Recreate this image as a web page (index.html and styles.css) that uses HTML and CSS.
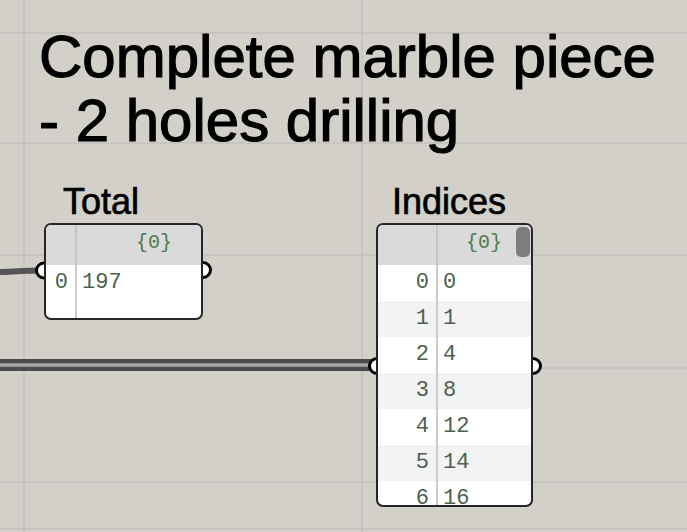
FILE: index.html
```html
<!DOCTYPE html>
<html>
<head>
<meta charset="utf-8">
<link rel="stylesheet" href="styles.css">
</head>
<body>
<div class="canvas">
  <svg class="layer" width="687" height="532" viewBox="0 0 687 532">
    <g class="grid">
      <line x1="24" y1="0" x2="24" y2="532"/>
      <line x1="362" y1="0" x2="362" y2="532"/>
      <line x1="0" y1="33" x2="687" y2="33"/>
      <line x1="0" y1="143" x2="687" y2="143"/>
      <line x1="0" y1="255" x2="687" y2="255"/>
      <line x1="0" y1="368" x2="687" y2="368"/>
      <line x1="0" y1="482" x2="687" y2="482"/>
      <line x1="0" y1="529" x2="687" y2="529"/>
    </g>
  </svg>

  <div class="title">Complete marble piece<br>- 2 holes drilling</div>

  <svg class="layer" width="687" height="532" viewBox="0 0 687 532">
    <path class="wire" d="M0 272 C 14 271.5, 26 270.5, 44 270.5"/>
    <path class="wire-list-outer" d="M0 365 L376 365"/>
    <path class="wire-list-inner" d="M0 365 L376 365"/>
    <circle class="grip" cx="44" cy="270.5" r="7.5"/>
    <circle class="grip" cx="203" cy="270" r="7.5"/>
    <circle class="grip" cx="377" cy="366" r="7.5"/>
    <circle class="grip" cx="533" cy="366" r="7.5"/>
  </svg>

  <div class="node node-total">
    <div class="label label-total">Total</div>
    <div class="panel panel-total">
      <div class="row head"><div class="idx"></div><div class="val">{0}</div></div>
      <div class="row"><div class="idx">0</div><div class="val">197</div></div>
      <div class="row"><div class="idx"></div><div class="val"></div></div>
    </div>
  </div>

  <div class="node node-indices">
    <div class="label label-indices">Indices</div>
    <div class="panel panel-indices">
      <div class="scroll"></div>
      <div class="row head"><div class="idx"></div><div class="val">{0}</div></div>
      <div class="row"><div class="idx">0</div><div class="val">0</div></div>
      <div class="row alt"><div class="idx">1</div><div class="val">1</div></div>
      <div class="row"><div class="idx">2</div><div class="val">4</div></div>
      <div class="row alt"><div class="idx">3</div><div class="val">8</div></div>
      <div class="row"><div class="idx">4</div><div class="val">12</div></div>
      <div class="row alt"><div class="idx">5</div><div class="val">14</div></div>
      <div class="row"><div class="idx">6</div><div class="val">16</div></div>
    </div>
  </div>
</div>
</body>
</html>
```

FILE: styles.css
```css
html, body {
  margin: 0;
  padding: 0;
  background: #d3d0ca;
}

.canvas {
  position: relative;
  width: 687px;
  height: 532px;
  overflow: hidden;
  background: #d3d0ca;
  font-family: "Liberation Sans", Arial, sans-serif;
}

.layer {
  position: absolute;
  left: 0;
  top: 0;
  display: block;
}

.grid line {
  stroke: #c4c1bb;
  stroke-width: 1.5;
}

.title {
  position: absolute;
  left: 39px;
  top: 25px;
  font-size: 60px;
  line-height: 64px;
  color: #000;
  white-space: nowrap;
  -webkit-text-stroke: 1.2px #000;
}

.wire {
  fill: none;
  stroke: #555555;
  stroke-width: 6;
}

.wire-list-outer {
  fill: none;
  stroke: #4b4b4b;
  stroke-width: 12;
}

.wire-list-inner {
  fill: none;
  stroke: #a9a7a3;
  stroke-width: 3.5;
}

.grip {
  fill: #ffffff;
  stroke: #000000;
  stroke-width: 3;
}

.node {
  position: absolute;
  display: flex;
  flex-direction: column;
  gap: 1px;
}

.node-total {
  left: 44px;
  top: 182px;
}

.node-indices {
  left: 376px;
  top: 182px;
}

.label {
  font-size: 36px;
  line-height: 40px;
  height: 40px;
  color: #000;
  white-space: nowrap;
  -webkit-text-stroke: 0.7px #000;
}

.label-total {
  margin-left: 19px;
}

.label-indices {
  margin-left: 16px;
}

.panel {
  position: relative;
  box-sizing: border-box;
  border: 2px solid #262626;
  border-radius: 7px;
  background: #ffffff;
  overflow: hidden;
  display: flex;
  flex-direction: column;
  font-family: "Liberation Mono", "Courier New", monospace;
}

.panel-total {
  width: 159px;
  height: 97px;
  --idx: 31px;
}

.panel-indices {
  width: 157px;
  height: 284px;
  --idx: 60px;
}

.row {
  display: flex;
  height: 36px;
  flex: none;
  font-size: 22px;
  line-height: 36px;
  color: #4d5f4d;
}

.row.alt {
  background: #f3f3f3;
}

.row.head {
  height: 40px;
  background: #dadada;
  font-size: 20px;
  line-height: 36px;
  color: #4c7a4c;
}

.idx {
  box-sizing: border-box;
  width: var(--idx);
  flex: none;
  border-right: 2px solid #cbcbcb;
  text-align: right;
  padding-right: 7px;
}

.row.head .idx {
  border-right-color: #c6c6c6;
}

.val {
  flex: 1;
  padding-left: 5px;
  white-space: nowrap;
}

.row.head .val {
  text-align: right;
  padding-right: 29px;
}

.scroll {
  position: absolute;
  right: 1px;
  top: 2px;
  width: 14px;
  height: 30px;
  border-radius: 5px;
  background: #7d7d7d;
}
```
